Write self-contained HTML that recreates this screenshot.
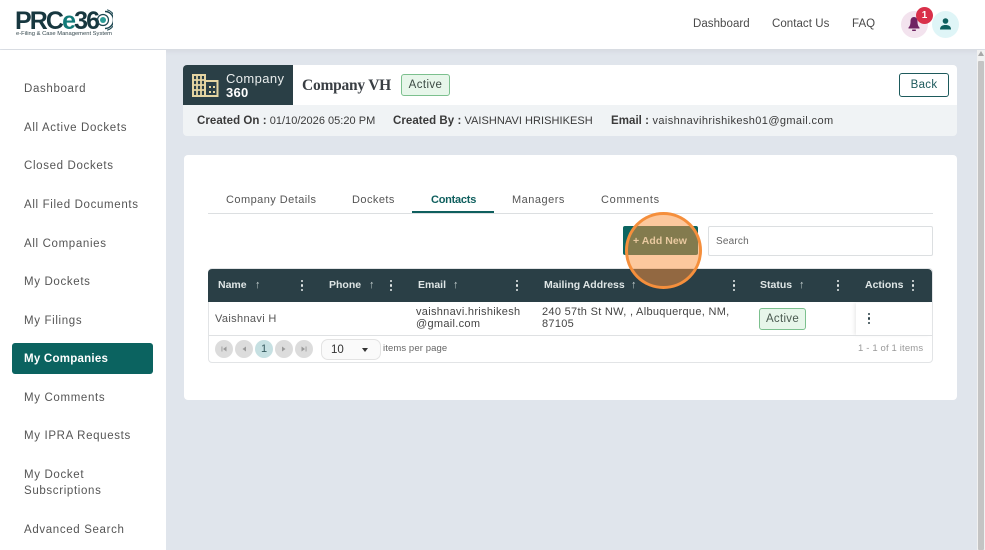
<!DOCTYPE html>
<html><head><meta charset="utf-8">
<style>
html,body{margin:0;padding:0;width:985px;height:550px;overflow:hidden;background:#e0e5ec}
body{position:relative;font-family:"Liberation Sans",sans-serif;color:#4a4a4a}
.a{position:absolute;white-space:nowrap}
.t{position:absolute;white-space:nowrap;font-size:11.5px;line-height:14px;letter-spacing:.05px}
.n{position:absolute;left:24px;white-space:nowrap;font-size:11.5px;line-height:16px;letter-spacing:.65px;color:#555}
.h{position:absolute;white-space:nowrap;font-size:10.5px;line-height:14px;font-weight:bold;color:#dfe6e6;letter-spacing:0;top:278px}
.d{position:absolute;width:3px;height:12px;top:280px}
.d i,.d2 i{display:block;width:2.4px;height:2.4px;border-radius:50%;background:#e4e9e9;margin-bottom:2px}
.d2 i{background:#2a3f46}
.ar{position:absolute;top:278px;font-size:11px;line-height:14px;color:#c5d0d0}
.pg{position:absolute;top:340px;width:18px;height:18px;border-radius:50%;background:#dcdcdc}
</style></head><body>

<!-- header -->
<div class="a" style="left:0;top:0;width:985px;height:49px;background:#fff;box-shadow:0 2px 6px rgba(0,0,0,.06)"></div>
<div class="a" style="left:15px;top:6px;font-size:25px;line-height:30px;font-weight:bold;color:#17373f;letter-spacing:-1.9px">PRC<span style="color:#117a78">e</span>36</div>
<svg class="a" style="left:96px;top:9px" width="17" height="22" viewBox="0 0 17 22">
<circle cx="7" cy="11" r="3" fill="#2b9c96"/>
<circle cx="7" cy="11" r="5.5" fill="none" stroke="#1c4650" stroke-width="1.2"/>
<path d="M9 2.5A8.5 8.5 0 0 1 9 19.5" fill="none" stroke="#1c4650" stroke-width="1.5"/>
<path d="M11 .8A10.5 10.5 0 0 1 11 21.2" fill="none" stroke="#1c4650" stroke-width="1"/>
</svg>
<div class="a" style="left:16px;top:30px;font-size:5.8px;line-height:8px;color:#34474d">e-Filing &amp; Case Management System</div>
<div class="t" style="left:693px;top:17px">Dashboard</div>
<div class="t" style="left:772px;top:17px">Contact Us</div>
<div class="t" style="left:852px;top:17px">FAQ</div>
<div class="a" style="left:901px;top:11px;width:27px;height:27px;border-radius:50%;background:#f3e3ee"></div>
<svg class="a" style="left:907px;top:16px" width="14" height="16" viewBox="0 0 14 16"><path d="M7 1C4.5 1 3.5 3 3.5 5.5C3.5 9 2.5 10.5 1.5 11.5V12.5H12.5V11.5C11.5 10.5 10.5 9 10.5 5.5C10.5 3 9.5 1 7 1Z" fill="#6f2463"/><rect x="5" y="13.5" width="4" height="1.5" rx=".7" fill="#6f2463"/></svg>
<div class="a" style="left:916px;top:7px;width:17px;height:17px;border-radius:50%;background:#d9304a;color:#fff;font-size:10px;line-height:17px;font-weight:bold;text-align:center">1</div>
<div class="a" style="left:932px;top:11px;width:27px;height:27px;border-radius:50%;background:#dff5f7"></div>
<svg class="a" style="left:939px;top:18px" width="13" height="12" viewBox="0 0 13 12"><circle cx="6.5" cy="3" r="2.8" fill="#0d5f5e"/><path d="M1 11.5C1 8 3.5 7 6.5 7S12 8 12 11.5Z" fill="#0d5f5e"/></svg>

<!-- sidebar -->
<div class="a" style="left:0;top:50px;width:166px;height:500px;background:#fff"></div>
<div class="n" style="top:81px">Dashboard</div>
<div class="n" style="top:120px">All Active Dockets</div>
<div class="n" style="top:158px">Closed Dockets</div>
<div class="n" style="top:197px">All Filed Documents</div>
<div class="n" style="top:236px">All Companies</div>
<div class="n" style="top:274px">My Dockets</div>
<div class="n" style="top:313px">My Filings</div>
<div class="a" style="left:12px;top:343px;width:141px;height:31px;background:#0b6360;border-radius:3px"></div>
<div class="n" style="top:351px;color:#fff;font-weight:bold;letter-spacing:.25px">My Companies</div>
<div class="n" style="top:390px">My Comments</div>
<div class="n" style="top:428px">My IPRA Requests</div>
<div class="n" style="top:467px">My Docket</div>
<div class="n" style="top:483px">Subscriptions</div>
<div class="n" style="top:522px">Advanced Search</div>

<!-- scrollbar -->
<div class="a" style="left:977px;top:50px;width:8px;height:500px;background:#f1f1f1"></div>
<div class="a" style="left:978px;top:61px;width:6px;height:489px;background:#c4c4c4;border-radius:1px"></div>
<div class="a" style="left:978px;top:51px;width:0;height:0;border-left:3px solid transparent;border-right:3px solid transparent;border-bottom:5px solid #a8a8a8"></div>

<!-- company card -->
<div class="a" style="left:183px;top:65px;width:774px;height:40px;background:#fff;border-radius:4px 4px 0 0"></div>
<div class="a" style="left:183px;top:105px;width:774px;height:31px;background:#f0f3f5;border-radius:0 0 4px 4px"></div>
<div class="a" style="left:183px;top:65px;width:110px;height:40px;background:#2a3f46;border-radius:4px 0 0 0"></div>
<svg class="a" style="left:192px;top:74px" width="27" height="23" viewBox="0 0 27 23" fill="none" stroke="#e5d5a2">
<rect x="1" y="1" width="12" height="21" stroke-width="2"/>
<rect x="13" y="7" width="12.5" height="15" stroke-width="2"/>
<path d="M1 6H13M1 11H13M1 16H13M5 1V22M9 1V22" stroke-width="1.8"/>
<path d="M18 12V14M18 17V19M22 12V14M22 17V19" stroke-width="2"/>
</svg>
<div class="a" style="left:226px;top:72px;font-size:13px;line-height:14px;color:#e9eded;letter-spacing:.4px">Company</div>
<div class="a" style="left:226px;top:86px;font-size:13px;line-height:14px;font-weight:bold;color:#fff;letter-spacing:.3px">360</div>
<div class="a" style="left:302px;top:76px;font-family:'Liberation Serif',serif;font-size:15.5px;line-height:19px;font-weight:bold;color:#3a3f44;letter-spacing:-.25px">Company VH</div>
<div class="a" style="left:401px;top:74px;width:47px;height:20px;border:1px solid #7cc08e;background:#e7f6ea;border-radius:3px;font-size:11.5px;line-height:20px;text-align:center;color:#3c4a44;letter-spacing:.4px">Active</div>
<div class="a" style="left:899px;top:73px;width:48px;height:22px;border:1px solid #1d5a5c;border-radius:3px;background:#fff;font-size:11.5px;line-height:22px;text-align:center;color:#1d5a5c;letter-spacing:.3px">Back</div>
<div class="t" style="left:197px;top:114px;color:#3a3a3a;font-size:11px;letter-spacing:.02px"><b style="font-size:11.5px;letter-spacing:.05px">Created On :</b> 01/10/2026 05:20 PM</div>
<div class="t" style="left:393px;top:114px;color:#3a3a3a;font-size:11px;letter-spacing:.05px"><b style="font-size:11.5px;letter-spacing:.05px">Created By :</b> VAISHNAVI HRISHIKESH</div>
<div class="t" style="left:611px;top:114px;color:#3a3a3a;font-size:11px;letter-spacing:.39px"><b style="font-size:11.5px;letter-spacing:.05px">Email :</b> vaishnavihrishikesh01@gmail.com</div>

<!-- main card -->
<div class="a" style="left:184px;top:155px;width:773px;height:245px;background:#fff;border-radius:4px"></div>
<div class="a" style="left:208px;top:213px;width:725px;height:1px;background:#dcdfe1"></div>
<div class="t" style="left:226px;top:193px;font-size:11px;color:#555;letter-spacing:.45px">Company Details</div>
<div class="t" style="left:352px;top:193px;font-size:11px;color:#555;letter-spacing:.45px">Dockets</div>
<div class="t" style="left:431px;top:193px;font-size:11px;font-weight:bold;color:#0f5f5e;letter-spacing:-.25px">Contacts</div>
<div class="a" style="left:412px;top:211px;width:82px;height:2px;background:#0f5f5e"></div>
<div class="t" style="left:512px;top:193px;font-size:11px;color:#555;letter-spacing:.5px">Managers</div>
<div class="t" style="left:601px;top:193px;font-size:11px;color:#555;letter-spacing:.7px">Comments</div>

<!-- add new + search -->
<div class="a" style="left:623px;top:226px;width:75px;height:29px;background:#0c6561;border-radius:2px"></div>
<div class="a" style="left:708px;top:226px;width:223px;height:28px;border:1px solid #dcdfe1;border-radius:2px;background:#fff"></div>
<div class="a" style="left:716px;top:235px;font-size:10px;line-height:14px;color:#666;letter-spacing:.2px">Search</div>

<!-- table -->
<div class="a" style="left:208px;top:268px;width:723px;height:93px;border:1px solid #e2e4e6;border-radius:4px;background:#fff"></div>
<div class="a" style="left:208px;top:269px;width:724px;height:33px;background:#2a3f46;border-radius:4px 4px 0 0"></div>
<div class="h" style="left:218px">Name</div><div class="ar" style="left:255px">↑</div>
<div class="h" style="left:329px">Phone</div><div class="ar" style="left:369px">↑</div>
<div class="h" style="left:418px">Email</div><div class="ar" style="left:453px">↑</div>
<div class="h" style="left:544px">Mailing Address</div><div class="ar" style="left:631px">↑</div>
<div class="h" style="left:760px">Status</div><div class="ar" style="left:799px">↑</div>
<div class="h" style="left:865px">Actions</div>
<div class="d" style="left:301px"><i></i><i></i><i></i></div>
<div class="d" style="left:390px"><i></i><i></i><i></i></div>
<div class="d" style="left:516px"><i></i><i></i><i></i></div>
<div class="d" style="left:733px"><i></i><i></i><i></i></div>
<div class="d" style="left:837px"><i></i><i></i><i></i></div>
<div class="d" style="left:912px"><i></i><i></i><i></i></div>

<div class="t" style="left:215px;top:312px;font-size:11px;color:#555;letter-spacing:.35px">Vaishnavi H</div>
<div class="t" style="left:416px;top:306px;font-size:11px;line-height:12px;color:#444;letter-spacing:.3px">vaishnavi.hrishikesh<br>@gmail.com</div>
<div class="t" style="left:542px;top:306px;font-size:11px;line-height:12px;color:#444;letter-spacing:.3px">240 57th St NW, , Albuquerque, NM,<br>87105</div>
<div class="a" style="left:759px;top:308px;width:45px;height:20px;border:1px solid #7cc08e;background:#e7f6ea;border-radius:3px;font-size:11.5px;line-height:20px;text-align:center;color:#4a5a50;letter-spacing:.3px">Active</div>
<div class="a" style="left:856px;top:303px;width:75px;height:32px;background:#fff;box-shadow:-2px 0 3px rgba(0,0,0,.07)"></div>
<div class="a d2" style="left:868px;top:313px"><i></i><i></i><i></i></div>
<div class="a" style="left:209px;top:335px;width:723px;height:1px;background:#dfe1e3"></div>

<!-- pager -->
<div class="pg" style="left:215px"></div>
<div class="pg" style="left:235px"></div>
<div class="pg" style="left:255px;background:#c6e0e2;color:#33585c;font-size:11px;line-height:18px;text-align:center">1</div>
<div class="pg" style="left:275px"></div>
<div class="pg" style="left:295px"></div>
<svg class="a" style="left:215px;top:340px" width="98" height="18" viewBox="0 0 98 18" fill="#9a9a9a">
<path d="M6.5 6.5V11.5H7.4V6.5ZM11.5 6.5L8 9L11.5 11.5Z"/>
<path d="M31 6.5L27.5 9L31 11.5Z"/>
<path d="M67 6.5L70.5 9L67 11.5Z"/>
<path d="M86.5 6.5L90 9L86.5 11.5ZM90.6 6.5V11.5H91.5V6.5Z"/>
</svg>
<div class="a" style="left:321px;top:339px;width:58px;height:19px;border:1px solid #e3e3e3;border-radius:7px;background:#fafafa"></div>
<div class="a" style="left:331px;top:343px;font-size:11.5px;line-height:14px;color:#333">10</div>
<div class="a" style="left:362px;top:348px;width:0;height:0;border-left:3.5px solid transparent;border-right:3.5px solid transparent;border-top:4px solid #333"></div>
<div class="a" style="left:383px;top:342px;font-size:9.5px;line-height:14px;color:#666;letter-spacing:.1px">items per page</div>
<div class="a" style="left:858px;top:342px;font-size:9.5px;line-height:14px;color:#999;letter-spacing:.15px">1 - 1 of 1 items</div>

<!-- highlight overlay -->
<div class="a" style="left:625px;top:212px;width:77px;height:77px;box-sizing:border-box;border-radius:50%;border:3.5px solid #f58f3c;background:rgba(250,145,60,.5)"></div>
<div class="a" style="left:633px;top:234px;font-size:10.5px;line-height:14px;font-weight:bold;color:#e9c9a0;letter-spacing:.05px">+ Add New</div>
</body></html>
